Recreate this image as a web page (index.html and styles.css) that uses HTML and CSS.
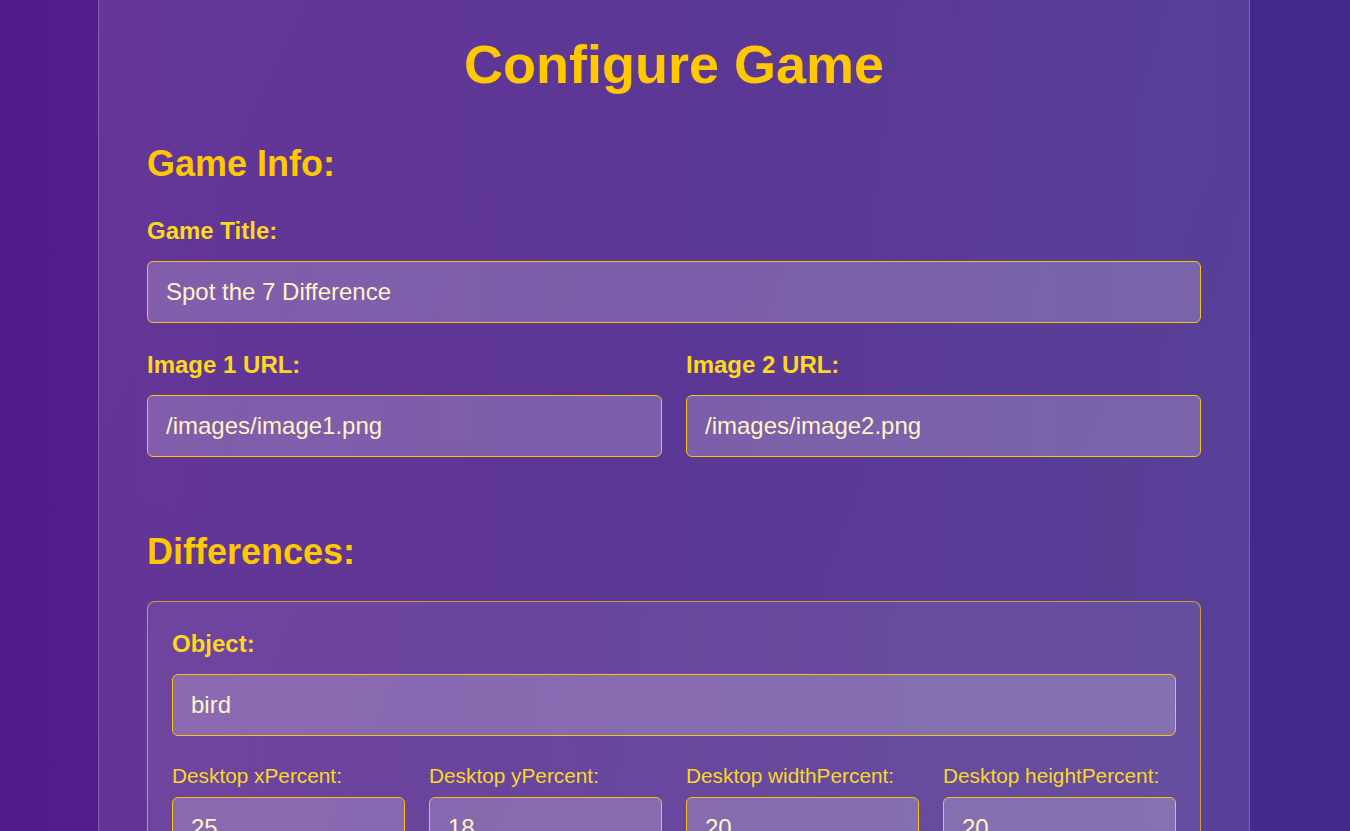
FILE: index.html
```html
<!DOCTYPE html>
<html lang="en">
<head>
<meta charset="utf-8">
<title>Configure Game</title>
<link rel="stylesheet" href="styles.css">
</head>
<body>
<main class="panel">
  <h1 class="page-title">Configure Game</h1>

  <section class="section">
    <h2 class="section-title">Game Info:</h2>
    <div class="form-group">
      <label class="label">Game Title:</label>
      <input class="input" type="text" value="Spot the 7 Difference">
    </div>
    <div class="row-2">
      <div class="form-group">
        <label class="label">Image 1 URL:</label>
        <input class="input" type="text" value="/images/image1.png">
      </div>
      <div class="form-group">
        <label class="label">Image 2 URL:</label>
        <input class="input" type="text" value="/images/image2.png">
      </div>
    </div>
  </section>

  <section class="section differences">
    <h2 class="section-title">Differences:</h2>
    <div class="diff-card">
      <div class="form-group">
        <label class="label">Object:</label>
        <input class="input" type="text" value="bird">
      </div>
      <div class="row-4">
        <div class="form-group">
          <label class="small-label">Desktop xPercent:</label>
          <input class="input" type="number" value="25">
        </div>
        <div class="form-group">
          <label class="small-label">Desktop yPercent:</label>
          <input class="input" type="number" value="18">
        </div>
        <div class="form-group">
          <label class="small-label">Desktop widthPercent:</label>
          <input class="input" type="number" value="20">
        </div>
        <div class="form-group">
          <label class="small-label">Desktop heightPercent:</label>
          <input class="input" type="number" value="20">
        </div>
      </div>
      <div class="row-4">
        <div class="form-group">
          <label class="small-label">Mobile xPercent:</label>
          <input class="input" type="number" value="25">
        </div>
        <div class="form-group">
          <label class="small-label">Mobile yPercent:</label>
          <input class="input" type="number" value="18">
        </div>
        <div class="form-group">
          <label class="small-label">Mobile widthPercent:</label>
          <input class="input" type="number" value="20">
        </div>
        <div class="form-group">
          <label class="small-label">Mobile heightPercent:</label>
          <input class="input" type="number" value="20">
        </div>
      </div>
    </div>
  </section>
</main>
</body>
</html>
```

FILE: styles.css
```css
* {
  box-sizing: border-box;
}

html, body {
  margin: 0;
  padding: 0;
}

body {
  min-height: 100vh;
  font-family: "Liberation Sans", Arial, sans-serif;
  background: linear-gradient(90deg, #521b8b 0%, #4a2089 45%, #42298b 100%);
  overflow: hidden;
}

.panel {
  width: 1152px;
  margin: 0 0 0 calc(50% - 577px);
  padding: 33px 48px 48px;
  background:
    linear-gradient(115deg, rgba(255, 255, 255, 0.02) 0%, rgba(255, 255, 255, 0) 40%, rgba(255, 255, 255, 0.02) 100%),
    rgba(255, 255, 255, 0.1);
  border: 1px solid rgba(255, 255, 255, 0.22);
  border-top: none;
  min-height: 1200px;
}

.page-title {
  margin: 0 0 48px;
  text-align: center;
  font-size: 54px;
  font-weight: 700;
  line-height: normal;
  color: #ffc800;
}

.section {
  margin-bottom: 74px;
}

.section-title {
  margin: 0 0 32px;
  font-size: 36px;
  font-weight: 700;
  line-height: normal;
  color: #ffc800;
}

.differences .section-title {
  margin-bottom: 28px;
}

.form-group {
  display: flex;
  flex-direction: column;
  margin-bottom: 28px;
}

.row-2 .form-group,
.row-4 .form-group {
  margin-bottom: 0;
}

.row-2 {
  display: grid;
  grid-template-columns: 1fr 1fr;
  gap: 24px;
  margin-bottom: 28px;
}

.row-4 {
  display: grid;
  grid-template-columns: repeat(4, 1fr);
  gap: 24px;
  margin-bottom: 28px;
}

.label {
  display: block;
  margin-bottom: 16px;
  font-size: 24px;
  font-weight: 700;
  line-height: normal;
  color: #fcd920;
}

.small-label {
  display: block;
  margin-bottom: 9px;
  font-size: 20.8px;
  font-weight: 400;
  line-height: normal;
  color: #f8d82a;
}

.input {
  display: block;
  width: 100%;
  height: 62px;
  margin: 0;
  padding: 16px 18px;
  font-family: "Liberation Sans", Arial, sans-serif;
  font-size: 24px;
  line-height: 28px;
  color: #fff4c8;
  background: rgba(255, 255, 255, 0.2);
  border: 1px solid #f8c20e;
  border-radius: 6px;
  outline: none;
  -moz-appearance: textfield;
}

.input::-webkit-outer-spin-button,
.input::-webkit-inner-spin-button {
  -webkit-appearance: none;
  margin: 0;
}

.diff-card {
  padding: 28px 24px 4px;
  background: rgba(255, 255, 255, 0.08);
  border: 1px solid rgba(246, 178, 40, 0.75);
  border-radius: 8px;
}
```
